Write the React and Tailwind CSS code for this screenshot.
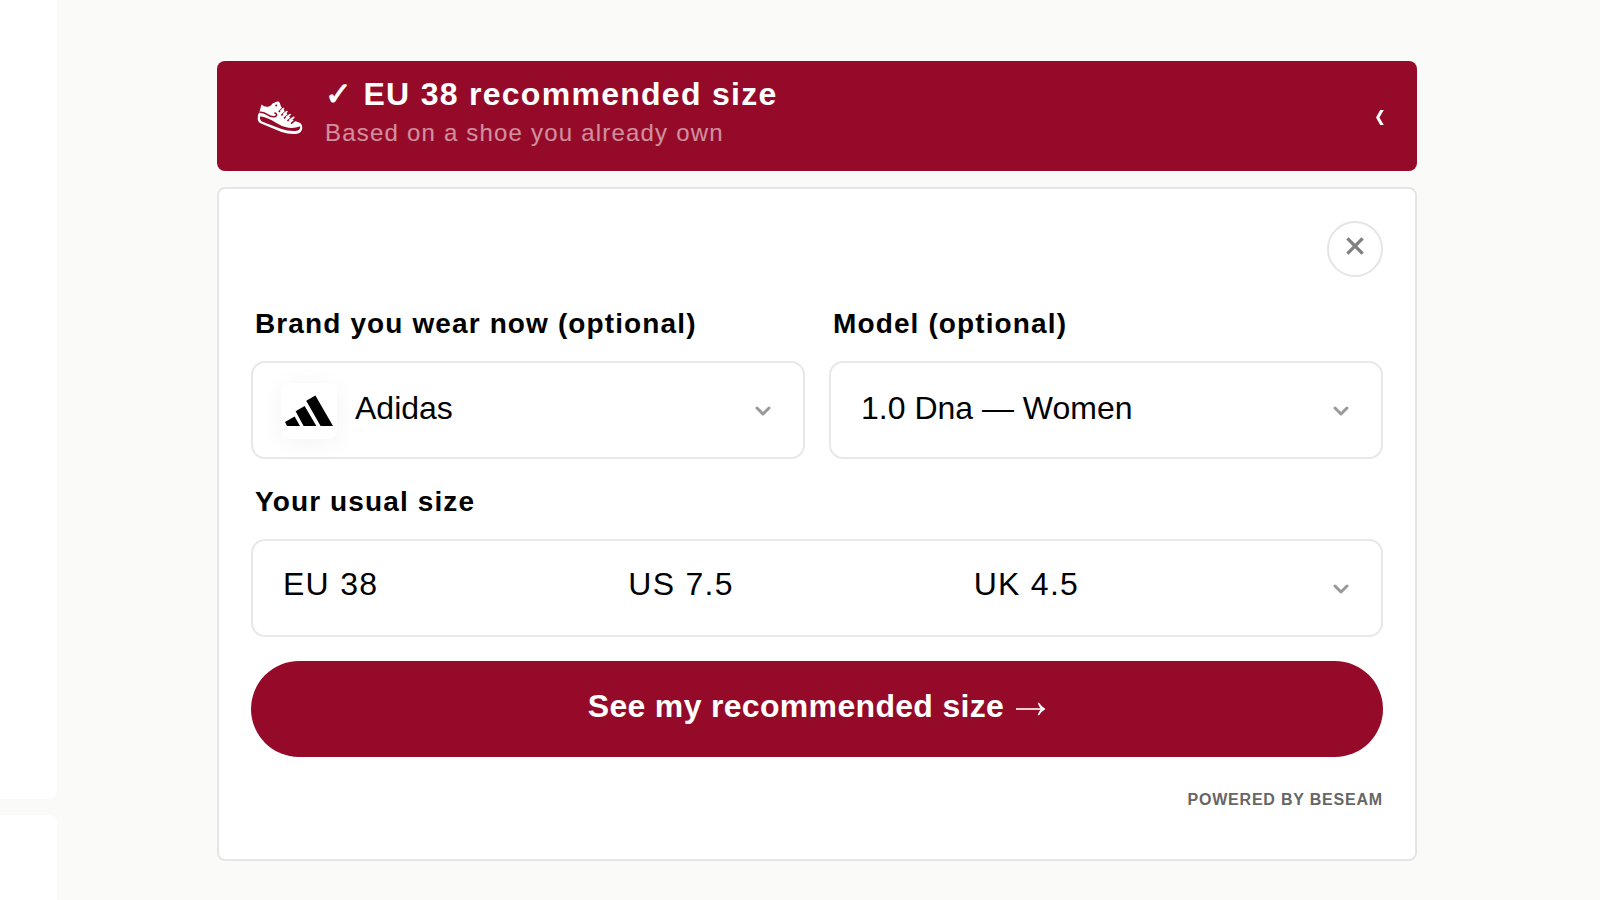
import React, { useState } from "react";

const brands = ["Adidas", "Asics", "New Balance", "Nike"];
const models = ["1.0 Dna — Women", "Gazelle — Women", "Samba — Women"];
const sizes = [
    { eu: "EU 37", us: "US 6.5", uk: "UK 4" },
    { eu: "EU 38", us: "US 7.5", uk: "UK 4.5" },
    { eu: "EU 39", us: "US 8", uk: "UK 5.5" },
];

const SneakerIcon = () => (
    <svg viewBox="0 0 46 38" className="w-[46px] h-[38px] shrink-0" aria-hidden="true">
        <g transform="translate(0 4)">
            {/* Upper and sole */}
            <path
                fill="#fff"
                d="M4.5 3.5 Q8 6.8 12 5.4 Q14.5 4.5 15.5 2.6 L20 .6 Q22 .2 22.8 2 L24 5.5 L34 17.5 Q37 20.3 41.5 21.3 Q45.3 22.6 45.3 27 Q45.2 32.6 38 33 Q31.5 33.4 24.5 31 L4 22.6 Q.7 21 .7 17.5 Q.8 13 2.6 10.5 Z"
            />
            {/* Sole groove */}
            <path
                fill="#960a29"
                d="M3 15.4 Q5 15.3 9 16.8 Q15 19 19.5 22 Q25 26 31.5 26.8 Q38 27.5 43.2 25.2 Q43.5 29.6 38.5 30 Q31.5 30.4 24.5 28 L5.5 20.8 Q2.5 19.4 3 15.4 Z"
            />
            {/* Side stripe */}
            <path
                fill="none"
                stroke="#960a29"
                strokeWidth="1.6"
                strokeLinecap="round"
                d="M3 11.2 Q6.5 11 10 13.4 Q15.5 17 18.8 15.2 Q20.8 13.6 18 12"
            />
            <circle cx="19.2" cy="4.6" r="1" fill="#960a29" />
            {/* Laces */}
            <path
                stroke="#960a29"
                strokeWidth="1.6"
                d="M26 6.6 L21.8 11 M29 10 L24.4 14.4 M32 13 L27 17.4 M35.4 15.8 L30.4 20 M39 18.4 L34 22.6"
            />
            <path
                stroke="#fff"
                strokeWidth="1.8"
                strokeLinecap="round"
                d="M24 9.8 L26.4 7.6 M26.8 13 L29.8 10.6 M29.6 16.2 L33 13.6 M33 19 L36.6 16.4"
            />
        </g>
    </svg>
);

const AdidasLogo = () => (
    <svg viewBox="0 0 56 56" className="w-14 h-14" aria-hidden="true">
        <path d="M4 39 L13.6 33.6 L19 43 L6 43 Z M14.6 28.2 L23.6 23 L35.4 43 L22.6 43 Z M25.2 17.8 L34.4 12.6 L52 43 L39.6 43 Z" />
    </svg>
);

const ChevronLeft = () => (
    <svg viewBox="0 0 10 20" className="w-2.5 h-5 shrink-0" fill="#fff" aria-hidden="true">
        <path d="M5.2 4 L8.8 4 L4.4 11.5 L8.8 19 L5.2 19 L1 11.5 Z" />
    </svg>
);

const CloseIcon = () => (
    <svg viewBox="0 0 20 20" className="w-5 h-5" stroke="#808080" strokeWidth="3.3" aria-hidden="true">
        <path d="M2.4 2.4 L17.6 17.6 M17.6 2.4 L2.4 17.6" />
    </svg>
);

const ArrowRight = () => (
    <svg viewBox="0 0 30 20" className="w-[30px] h-5" fill="#fff" aria-hidden="true">
        <path fillOpacity="0.8" d="M0 12 H26 V14 H0 Z" />
        <path d="M21.8 6.8 L23 6.8 Q25.5 10.6 29.5 13 Q25.5 15.4 23 19.2 L21.8 19.2 Q22.6 15.8 25 13 Q22.6 10.2 21.8 6.8 Z" />
    </svg>
);

const ChevronDown = () => (
    <svg
        viewBox="0 0 24 24"
        className="w-6 h-6 absolute right-7 top-1/2 -translate-y-1/2 pointer-events-none"
        fill="none"
        stroke="#999"
        strokeWidth="3"
        strokeLinecap="round"
        strokeLinejoin="round"
        aria-hidden="true"
    >
        <path d="M6 10l6 6 6-6" />
    </svg>
);

const labelClass = "block px-1 mb-[22px] text-[28px] leading-[30px] font-bold tracking-[0.04em]";
const fieldClass = "relative h-[98px] border-2 border-[#e8e8e8] rounded-[14px] bg-white";
const selectClass =
    "appearance-none w-full h-full pb-1 pr-16 bg-transparent text-[32px] rounded-[14px] cursor-pointer";

export default function App() {
    const [open, setOpen] = useState(true);
    const [brand, setBrand] = useState("Adidas");
    const [model, setModel] = useState("1.0 Dna — Women");
    const [sizeIndex, setSizeIndex] = useState(1);
    const size = sizes[sizeIndex];

    return (
        <div className="flex min-h-screen bg-[#fafaf8] text-black font-['Liberation_Sans',Arial,sans-serif]">
            {/* Product gallery edge */}
            <div className="w-[57px] shrink-0 h-screen flex flex-col gap-4 overflow-hidden">
                <div className="h-[799px] shrink-0 bg-white rounded-br-lg" />
                <div className="flex-1 bg-white rounded-tr-lg" />
            </div>

            <main className="flex-1 min-w-0 pt-[61px] pb-10 pl-40 pr-[183px]">
                {/* Recommendation banner */}
                <button
                    type="button"
                    onClick={() => setOpen(!open)}
                    aria-expanded={open}
                    className="w-full min-h-[110px] flex items-center gap-[22px] pl-10 pr-8 rounded-lg bg-[#960a29] text-white text-left cursor-pointer"
                >
                    <SneakerIcon />
                    <span className="flex-1 pb-1.5">
                        <span className="block text-[32px] leading-10 font-bold tracking-[0.04em]">
                            ✓ EU 38 recommended size
                        </span>
                        <span className="block text-2xl leading-[38px] tracking-wider text-white/55">
                            Based on a shoe you already own
                        </span>
                    </span>
                    <ChevronLeft />
                </button>

                {open && (
                    <form
                        onSubmit={(e) => e.preventDefault()}
                        className="mt-4 px-8 pt-8 pb-12 bg-white border-2 border-[#e5e5e5] rounded-lg"
                    >
                        <div className="flex justify-end">
                            <button
                                type="button"
                                aria-label="Close"
                                onClick={() => setOpen(false)}
                                className="w-14 h-14 pb-1.5 flex items-center justify-center border-2 border-[#e5e5e5] rounded-full cursor-pointer"
                            >
                                <CloseIcon />
                            </button>
                        </div>

                        <div className="mt-8 grid grid-cols-2 gap-6">
                            {/* Brand */}
                            <div>
                                <label htmlFor="brand" className={labelClass}>
                                    Brand you wear now (optional)
                                </label>
                                <div className={fieldClass}>
                                    <div className="absolute left-7 top-5 rounded-lg bg-white shadow-[0_4px_24px_rgba(0,0,0,0.05)] pointer-events-none">
                                        <AdidasLogo />
                                    </div>
                                    <select
                                        id="brand"
                                        value={brand}
                                        onChange={(e) => setBrand(e.target.value)}
                                        className={`${selectClass} pl-[102px]`}
                                    >
                                        {brands.map((b) => (
                                            <option key={b}>{b}</option>
                                        ))}
                                    </select>
                                    <ChevronDown />
                                </div>
                            </div>

                            {/* Model */}
                            <div>
                                <label htmlFor="model" className={labelClass}>
                                    Model (optional)
                                </label>
                                <div className={fieldClass}>
                                    <select
                                        id="model"
                                        value={model}
                                        onChange={(e) => setModel(e.target.value)}
                                        className={`${selectClass} pl-[30px]`}
                                    >
                                        {models.map((m) => (
                                            <option key={m}>{m}</option>
                                        ))}
                                    </select>
                                    <ChevronDown />
                                </div>
                            </div>
                        </div>

                        {/* Size, shown in three systems under one select */}
                        <div className="mt-7">
                            <label htmlFor="size" className={labelClass}>
                                Your usual size
                            </label>
                            <div className={fieldClass}>
                                <div
                                    className="h-full pl-[30px] pr-[62px] pb-2 grid grid-cols-3 items-center text-[32px] tracking-[0.04em]"
                                    aria-hidden="true"
                                >
                                    <span>{size.eu}</span>
                                    <span>{size.us}</span>
                                    <span>{size.uk}</span>
                                </div>
                                <select
                                    id="size"
                                    value={sizeIndex}
                                    onChange={(e) => setSizeIndex(Number(e.target.value))}
                                    className="absolute inset-0 w-full h-full opacity-0 cursor-pointer"
                                >
                                    {sizes.map((s, i) => (
                                        <option key={s.eu} value={i}>
                                            {s.eu} / {s.us} / {s.uk}
                                        </option>
                                    ))}
                                </select>
                                <ChevronDown />
                            </div>
                        </div>

                        <button
                            type="submit"
                            className="mt-6 w-full h-24 pb-1.5 flex items-center justify-center gap-3 rounded-full bg-[#960a29] text-white text-[32px] font-bold tracking-[0.01em] cursor-pointer"
                        >
                            See my recommended size
                            <ArrowRight />
                        </button>

                        <p className="mt-8 text-right text-base leading-[22px] font-bold tracking-wider text-[#666]">
                            POWERED BY BESEAM
                        </p>
                    </form>
                )}
            </main>
        </div>
    );
}
